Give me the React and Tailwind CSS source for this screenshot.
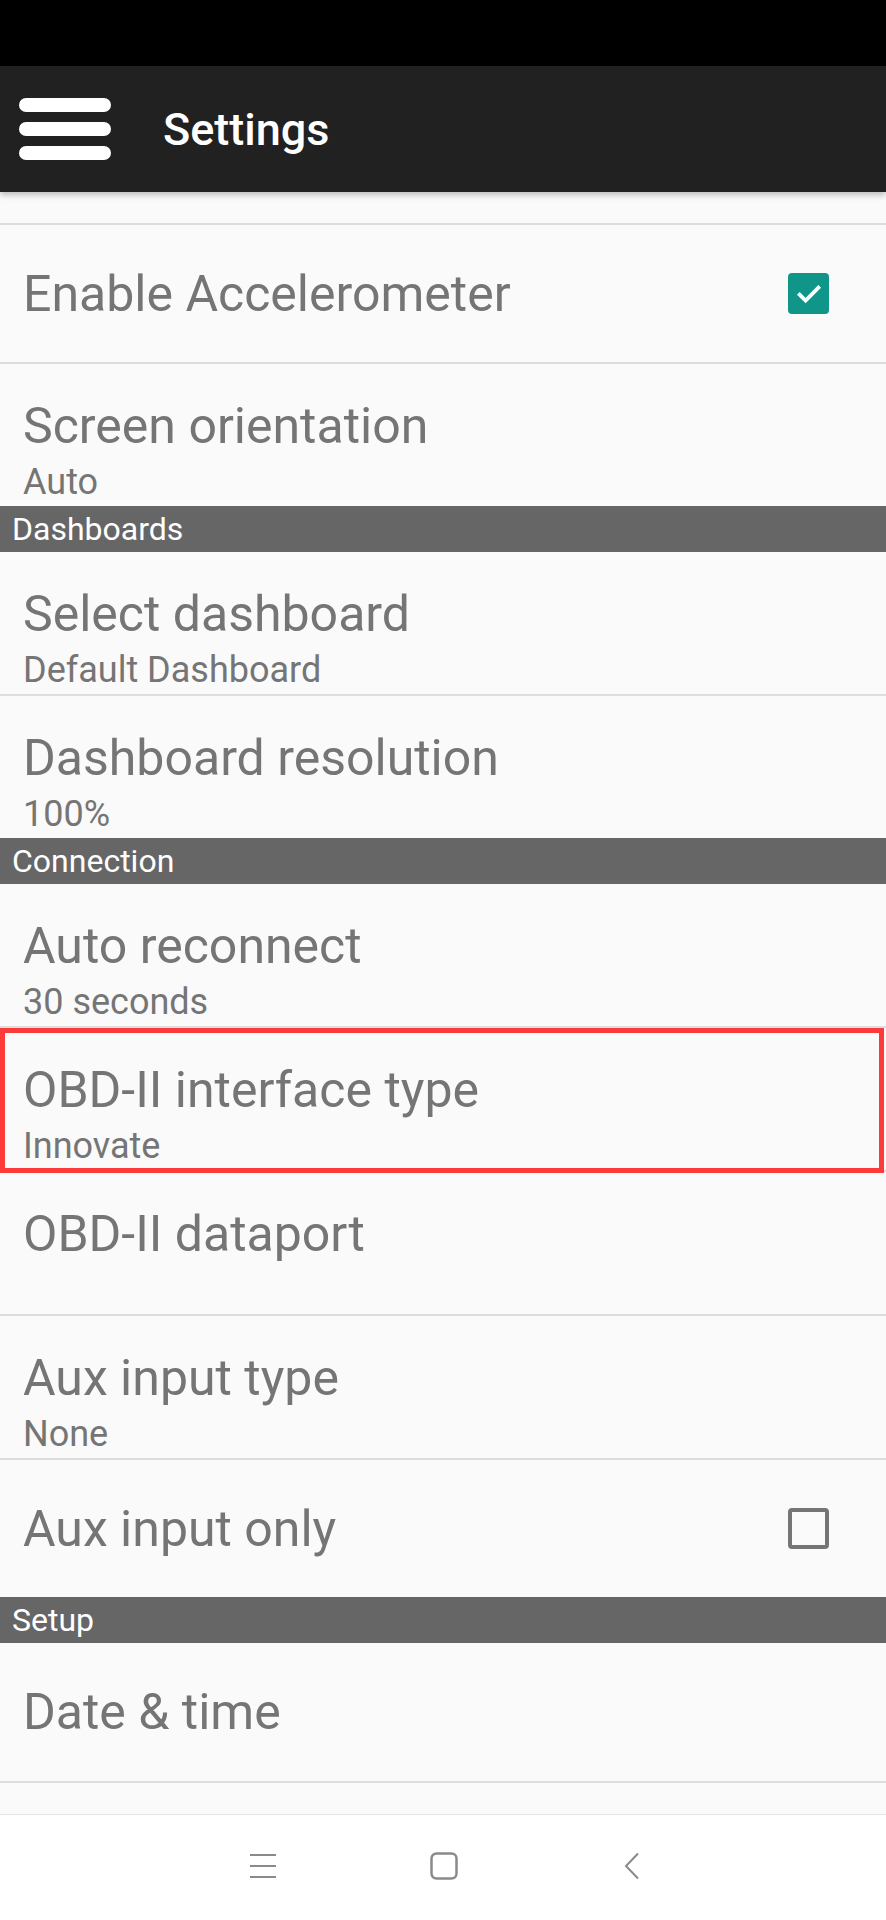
import React from "react";

const font = { fontFamily: "Roboto, 'Noto Sans', 'Liberation Sans', sans-serif" };

function Divider() {
  return <div className="h-[2px] bg-[#dddddd]" />;
}

function Header({ children }) {
  return (
    <div className="h-[46px] bg-[#666666] pl-[12px] text-[32px] leading-[46px] text-white">
      {children}
    </div>
  );
}

function TwoLine({ title, summary, highlight }) {
  return (
    <div className="relative h-[142px] px-[23px] pt-[32px] text-[#757575]">
      <div className="text-[50px] leading-[60px]">{title}</div>
      <div className="mt-[5px] h-[42px] text-[36px] leading-[42px]">{summary}</div>
      {highlight && (
        <div className="pointer-events-none absolute left-0 right-[2px] top-0 bottom-[-3px] border-[5px] border-[#fd3a3a]" />
      )}
    </div>
  );
}

function CheckRow({ title, checked }) {
  return (
    <div className="flex h-[137px] items-center justify-between pl-[23px] pr-[57px] text-[#757575]">
      <div className="text-[50px] leading-[60px]">{title}</div>
      {checked ? (
        <div className="flex h-[41px] w-[41px] items-center justify-center rounded-[4px] bg-[#0f9688]">
          <svg width="30" height="30" viewBox="0 0 24 24" fill="none">
            <path d="M4.5 12.5l4.8 4.8L19.5 7" stroke="white" strokeWidth="3" strokeLinecap="square" />
          </svg>
        </div>
      ) : (
        <div className="h-[41px] w-[41px] rounded-[4px] border-[4px] border-[#757575]" />
      )}
    </div>
  );
}

function PlainRow({ title }) {
  return (
    <div className="flex h-[138px] items-center px-[23px] text-[#757575]">
      <div className="text-[50px] leading-[60px]">{title}</div>
    </div>
  );
}

export default function App() {
  return (
    <div className="flex h-[1920px] w-[886px] flex-col overflow-hidden bg-[#fafafa]" style={font}>
      <div className="h-[66px] bg-black" />
      <div className="relative z-10 flex h-[126px] items-center bg-[#212121] shadow-[0_3px_6px_rgba(0,0,0,0.25)]">
        <div className="ml-[19px] flex w-[92px] flex-col gap-[10px]">
          <div className="h-[14px] rounded-full bg-white" />
          <div className="h-[14px] rounded-full bg-white" />
          <div className="h-[14px] rounded-full bg-white" />
        </div>
        <div className="ml-[52px] text-[45px] font-medium leading-none text-white">Settings</div>
      </div>
      <div className="h-[31px]" />
      <Divider />
      <CheckRow title="Enable Accelerometer" checked />
      <Divider />
      <TwoLine title="Screen orientation" summary="Auto" />
      <Header>Dashboards</Header>
      <TwoLine title="Select dashboard" summary="Default Dashboard" />
      <Divider />
      <TwoLine title="Dashboard resolution" summary="100%" />
      <Header>Connection</Header>
      <TwoLine title="Auto reconnect" summary="30 seconds" />
      <Divider />
      <TwoLine title="OBD-II interface type" summary="Innovate" highlight />
      <Divider />
      <TwoLine title="OBD-II dataport" summary="" />
      <Divider />
      <TwoLine title="Aux input type" summary="None" />
      <Divider />
      <CheckRow title="Aux input only" />
      <Header>Setup</Header>
      <PlainRow title="Date &amp; time" />
      <Divider />
      <div className="h-[31px]" />
      <div className="flex flex-1 items-center justify-center border-t border-[#e6e6e6] bg-white pb-[4px]">
        <div className="flex items-center">
          <svg width="28" height="26" viewBox="0 0 28 26" className="ml-[3px]">
            <path d="M1 2h26M1 13h26M1 24h26" stroke="#8a8a8a" strokeWidth="2" />
          </svg>
          <svg width="28" height="28" viewBox="0 0 28 28" className="ml-[153px]">
            <rect x="1.5" y="1.5" width="25" height="25" rx="5" fill="none" stroke="#8a8a8a" strokeWidth="2.5" />
          </svg>
          <svg width="18" height="28" viewBox="0 0 18 28" className="ml-[165px]">
            <path d="M15 1.5L3 14l12 12.5" fill="none" stroke="#8a8a8a" strokeWidth="2" />
          </svg>
        </div>
      </div>
    </div>
  );
}
